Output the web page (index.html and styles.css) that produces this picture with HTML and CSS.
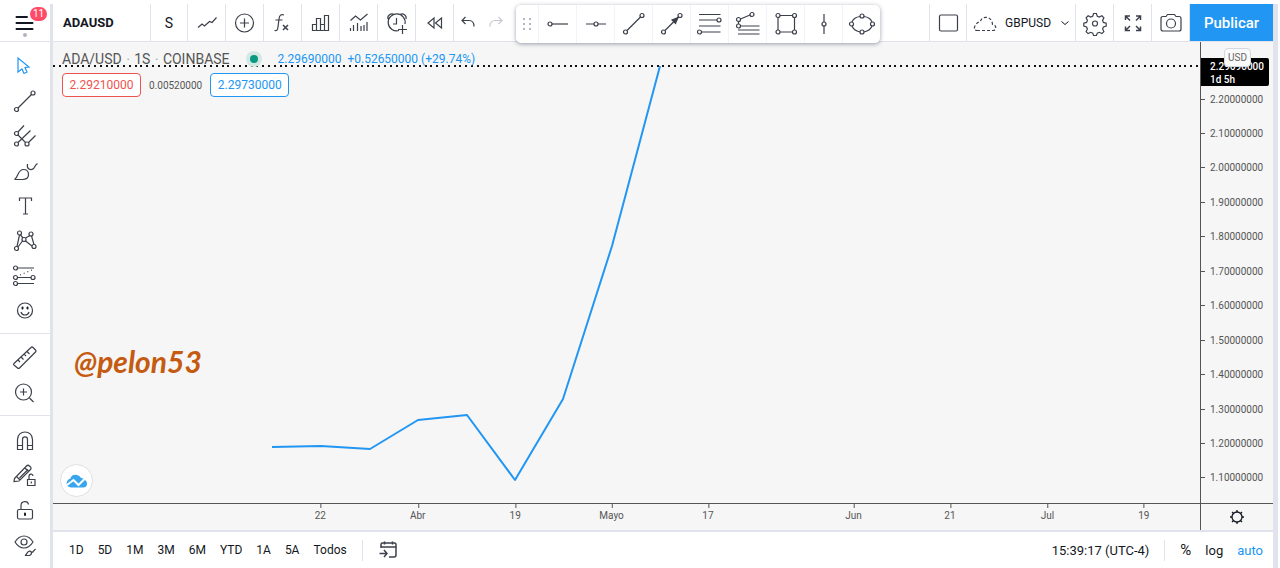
FILE: index.html
```html
<!DOCTYPE html>
<html lang="es">
<head>
<meta charset="utf-8">
<title>ADAUSD</title>
<meta name="viewport" content="width=device-width, initial-scale=1">
<link rel="stylesheet" href="styles.css">
</head>
<body>
<div class="app">
  <nav class="tools" aria-label="Herramientas de dibujo">
    <button class="menu" aria-label="Menú">
      <svg class="icon" viewBox="0 0 28 28"><path class="thick" d="M5.500 8h10.500M5.500 14h16M5.500 20h16"/></svg>
      <span class="count">11</span><span class="dot"></span>
    </button>
    <div class="group">
      <button class="tool active" aria-label="Cursor"><svg class="icon" viewBox="0 0 28 28"><path d="M7 6v14l4-3 2 4.500 3-1.500-2-4.500 4-.5z"/></svg></button>
      <button class="tool" aria-label="Línea"><svg class="icon" viewBox="0 0 28 28"><circle cx="22" cy="6" r="2"/><circle cx="5.500" cy="22.500" r="2"/><path d="M7 21L20.500 7.500"/></svg></button>
      <button class="tool" aria-label="Tridente"><svg class="icon" viewBox="0 0 28 28"><circle cx="5.500" cy="11.500" r="2"/><circle cx="5.500" cy="22" r="2"/><circle cx="16" cy="22" r="2"/><path d="M7 10l6-6.500M7 13l7.500 7.500M7 20.500L19.500 8.500M17.500 20.500L24.500 13.500"/></svg></button>
      <button class="tool" aria-label="Pincel"><svg class="icon" viewBox="0 0 28 28"><path d="M3.500 22.500c4-2 3-10 9-10 3 0 5 2 5 5s-2 5-6 5zM16.500 7c-1 5 3 7 6 4.500 1.500-1 1-3 4-5"/></svg></button>
      <button class="tool" aria-label="Texto"><svg class="icon" viewBox="0 0 28 28"><path d="M8.500 9V6h12v3M14.500 6v16M12 22h5"/></svg></button>
      <button class="tool" aria-label="Patrón"><svg class="icon" viewBox="0 0 28 28"><circle cx="8.500" cy="6" r="2"/><circle cx="20" cy="7" r="2"/><circle cx="13" cy="12.500" r="2"/><circle cx="5.500" cy="21.500" r="2"/><circle cx="23" cy="19.500" r="2"/><path d="M8.500 8L6 19.500M9.500 8l2.500 3M14.500 11L19 8.500M20.500 9l2.500 8.500M14.500 14l6.500 5M11.500 14L7 20"/></svg></button>
      <button class="tool" aria-label="Previsión"><svg class="icon" viewBox="0 0 28 28"><circle cx="4.500" cy="6" r="2"/><circle cx="4.500" cy="15.500" r="2"/><circle cx="22" cy="15.500" r="2"/><circle cx="4.500" cy="21.500" r="2"/><path d="M6.500 6H23M6.500 15.500H20M6.500 21.500H23"/><path stroke-dasharray="1 3" d="M9 13L22 7.500"/></svg></button>
      <button class="tool" aria-label="Iconos"><svg class="icon" viewBox="0 0 28 28"><circle cx="14" cy="13.500" r="7.500"/><path d="M10 15c1 4 7 4 8 0"/><path class="thick" d="M11.500 10.500v1M16.500 10.500v1"/></svg></button>
    </div>
    <div class="group">
      <button class="tool" aria-label="Medir"><svg class="icon" viewBox="0 0 28 28"><path d="M3 19.500L20 3.500q1-1 2 0l2.500 2.500q1 1 0 2L8.500 24q-1 1-2 0L3 21q-.8-.8 0-1.500zM7 16l2 2M10 13l2.500 2.500M13 10l2 2M16 7.500l2.500 2.500"/></svg></button>
      <button class="tool" aria-label="Acercar"><svg class="icon" viewBox="0 0 28 28"><circle cx="12.500" cy="13" r="8"/><path d="M12.500 9.500v7M9 13h7M18.500 19l4 4"/></svg></button>
    </div>
    <div class="group">
      <button class="tool" aria-label="Imán"><svg class="icon" viewBox="0 0 28 28"><path d="M6.500 23.500V13.500c0-10 15-10 15 0v10h-5v-10c0-3.500-5-3.500-5 0v10zM6.500 19.500h5M16.500 19.500h5"/></svg></button>
      <button class="tool" aria-label="Modo dibujo"><svg class="icon" viewBox="0 0 28 28"><path d="M3.500 17.500L15.500 5q1.500-1.500 3 0 2.500 2 1 3.500L8 20l-5 .5zM6 16l3 3M14 7l4 4M8.500 17L17 8.500"/><path d="M16.500 18.500h7.500v6h-7.500zM18 18.500v-3c0-3 4-3 4-.5"/><path d="M20.300 20.500v2"/></svg></button>
      <button class="tool" aria-label="Bloquear"><svg class="icon" viewBox="0 0 28 28"><rect x="6.500" y="13.500" width="15" height="9.500" rx="1.500"/><path d="M10 13.500V9.500c0-5 7-5 7.500-1"/><path class="thick" d="M14 17.500v1.500"/></svg></button>
      <button class="tool" aria-label="Ocultar"><svg class="icon" viewBox="0 0 28 28"><path d="M4 11c5-8 13-8 18 0-5 8-13 8-18 0z"/><circle cx="13" cy="11" r="3"/><path d="M14 24.500c2-1 2-4 4.500-4.500 2.500 0 3 3 0 4.500zM19 19.500c0 2 3 2.500 3.500.500l2-2"/></svg></button>
    </div>
  </nav>

  <div class="main">
    <header class="topbar">
      <button class="symbol">ADAUSD</button>
      <button class="cell text">S</button>
      <button class="cell" aria-label="Tipo de gráfico"><svg class="icon" viewBox="0 0 28 28"><path d="M5 18.500l4-3.500 2.500 2 5-4.500 2.500 1 4.500-5"/></svg></button>
      <button class="cell" aria-label="Comparar"><svg class="icon" viewBox="0 0 28 28"><circle cx="13.500" cy="14" r="9"/><path d="M13.500 9.500v9M9 14h9"/></svg></button>
      <button class="cell" aria-label="Indicadores"><svg class="icon" viewBox="0 0 28 28"><path d="M15 6c-3-1-4.500 0-5 4l-1 8c-.4 3-1 4-3.500 3.500M6.500 11h7"/><path class="medium" d="M14 16l5 5M19 16l-5 5"/></svg></button>
      <button class="cell" aria-label="Finanzas"><svg class="icon" viewBox="0 0 28 28"><path d="M5.500 21.500v-6h4v6zM9.500 21.500V9.500h4v12zM13.500 21.500v-6h4v6zM17.500 21.500V6.500h4v15z"/></svg></button>
      <button class="cell" aria-label="Plantillas"><svg class="icon" viewBox="0 0 28 28"><path d="M5.500 11.500l5-4.500 5 4 7-6M5.500 22v-3M8.500 22v-6M12.500 22v-8M16 22v-5M19 22v-6M22 22v-9"/></svg></button>
      <button class="cell" aria-label="Alerta"><svg class="icon" viewBox="0 0 28 28"><path d="M16 21.500A8.500 8.500 0 1 1 22 15M13.500 9v6h-3.500M5 10c-1-4 3-6 6-4.500M23 10c1-4-3-6-6-4.500M19.500 16v9M15 20.500h9"/></svg></button>
      <button class="cell" aria-label="Reproducir"><svg class="icon" viewBox="0 0 28 28"><path d="M13 9v10l-6-5zM20.500 9v10l-6-5z"/></svg></button>
      <div class="history">
        <button aria-label="Deshacer"><svg class="icon" viewBox="0 0 28 28"><path d="M11.500 8L8 11.500l3.500 3.500M8 11.500h7q5 0 5 6"/></svg></button>
        <button class="faded" aria-label="Rehacer"><svg class="icon" viewBox="0 0 28 28"><path d="M16.500 8l3.500 3.500-3.500 3.500M20 11.500h-7q-5 0-5 6"/></svg></button>
      </div>
      <div class="spacer"></div>
      <button class="cell first" aria-label="Diseño"><svg class="icon" viewBox="0 0 28 28"><rect x="5.500" y="6" width="18" height="16" rx="1.500"/></svg></button>
      <button class="layout"><svg class="icon" viewBox="0 0 28 28"><path stroke-dasharray="3 2" d="M6 21.500h16c4 0 3.500-6-.5-6-.5-9-11-9-12-3-5 .5-9 9-3.500 9z"/></svg><span>GBPUSD</span><svg class="chevron" viewBox="0 0 10 10"><path d="M1.500 3.500L5 6.500l3.500-3"/></svg></button>
      <button class="cell" aria-label="Configuración"><svg class="icon" viewBox="0 0 28 28"><path d="M12.600 4.500h2.800l.9 2.800 2 .8 2.600-1.300 2 2-1.300 2.600.8 2 2.800.9v2.800l-2.800.9-.8 2 1.300 2.600-2 2-2.600-1.300-2 .8-.9 2.400h-2.800l-.9-2.400-2-.8-2.600 1.300-2-2L6.400 20l-.8-2-2.800-.9v-2.800l2.800-.9.8-2L5.100 8.800l2-2 2.600 1.300 2-.8z"/><circle cx="14" cy="14.500" r="2.500"/></svg></button>
      <button class="cell" aria-label="Pantalla completa"><svg class="icon" viewBox="0 0 28 28"><path class="medium" d="M6.500 11V7H11M7 7.500l4 4M17 7h4.500v4M21 7.500l-4 4M6.500 17.500v4H11M7 21l4-4M17 21.500h4.500v-4M21 21l-4-4"/></svg></button>
      <button class="cell" aria-label="Captura"><svg class="icon" viewBox="0 0 28 28"><path d="M6 7.500h3l1.500-2h7l1.500 2h3q2 0 2 2V20q0 2-2 2H6q-2 0-2-2V9.500q0-2 2-2z"/><circle cx="14" cy="14.500" r="4.500"/></svg></button>
      <button class="publish">Publicar</button>
      <div class="favorites">
        <span class="grip"><svg viewBox="0 0 10 14"><path stroke-dasharray="2 3" d="M2 1v12M8 1v12"/></svg></span>
        <button aria-label="Rayo"><svg class="icon" viewBox="0 0 28 28"><circle cx="6" cy="14" r="2"/><path d="M8 14h16"/></svg></button>
        <button aria-label="Horizontal"><svg class="icon" viewBox="0 0 28 28"><circle cx="14" cy="14" r="2"/><path d="M4 14h8M16 14h8"/></svg></button>
        <button aria-label="Tendencia"><svg class="icon" viewBox="0 0 28 28"><circle cx="22" cy="5.500" r="2"/><circle cx="5.500" cy="22" r="2"/><path d="M7 20.500L20.500 7"/></svg></button>
        <button aria-label="Flecha"><svg class="icon" viewBox="0 0 28 28"><circle cx="22" cy="5.500" r="2"/><circle cx="5.500" cy="22" r="2"/><path d="M7 20.500L20.500 7"/><path class="solid" d="M20 7.500l-2.500 6-3.500-3.500z"/></svg></button>
        <button aria-label="Fibonacci"><svg class="icon" viewBox="0 0 28 28"><path d="M3 4.500h21.500M3 10h18M3 16h21.500M5 22h19.500"/><circle cx="23" cy="10" r="2"/><circle cx="3.500" cy="22" r="2"/></svg></button>
        <button aria-label="Extensión"><svg class="icon" viewBox="0 0 28 28"><circle cx="18" cy="4.500" r="2"/><circle cx="4.500" cy="9.500" r="2"/><circle cx="4.500" cy="16" r="2"/><path d="M6.500 9L16 5M4.500 11.500V14M6.500 16h19M4 20h21.500M4 24h21.500"/></svg></button>
        <button aria-label="Rectángulo"><svg class="icon" viewBox="0 0 28 28"><circle cx="6" cy="5.500" r="2"/><circle cx="22.500" cy="5.500" r="2"/><circle cx="6" cy="22" r="2"/><circle cx="22.500" cy="22" r="2"/><path d="M8 5.500h12.500M8 22h12.500M6 7.500V20M22.500 7.500V20"/></svg></button>
        <button aria-label="Vertical"><svg class="icon" viewBox="0 0 28 28"><circle cx="14" cy="14" r="2"/><path d="M14 4v8M14 16v8"/></svg></button>
        <button aria-label="Elipse"><svg class="icon" viewBox="0 0 28 28"><circle cx="14" cy="6" r="2"/><circle cx="14" cy="22" r="2"/><circle cx="3.500" cy="14" r="2"/><circle cx="24.500" cy="14" r="2"/><path d="M12 6.500C8 7 5 9.500 4 12M16 6.500c4 .5 7 3 8 5.500M4 16c1 3 4 5 8 6M24 16c-1 3-4 5-8 6"/></svg></button>
      </div>
    </header>

    <main class="chart">
      <section class="plot">
        <svg class="series" viewBox="0 0 1147 461" preserveAspectRatio="none">
          <path class="last" d="M0 24H1147"/>
          <polyline class="price" points="219,405 268,404 317,407 365,378 414,373 462,438 510,357 559,204 607,24"/>
        </svg>
        <div class="legend">
          <div class="legend-row"><span class="title">ADA/USD <i>·</i> 1S <i>·</i> COINBASE</span><span class="status"></span><span class="change"><span>2.29690000</span><span>+0.52650000 (+29.74%)</span></span></div>
          <div class="quotes"><button class="quote sell">2.29210000</button><span class="spread">0.00520000</span><button class="quote buy">2.29730000</button></div>
        </div>
        <div class="signature">@pelon53</div>
        <button class="logo" aria-label="Logo"><svg viewBox="0 0 22 14"><path class="cloud" d="M5 13.500h12c5 0 5-6 2-7.500-1-1.500-3-2-4-2C12-1 5 0 4.500 4.500-1 6-.5 13.500 5 13.500z"/><path class="wave" d="M1 11l6.500-5 5 5 6-6"/></svg></button>
      </section>
      <aside class="price-axis">
        <span>2.20000000</span><span>2.10000000</span><span>2.00000000</span><span>1.90000000</span><span>1.80000000</span><span>1.70000000</span><span>1.60000000</span><span>1.50000000</span><span>1.40000000</span><span>1.30000000</span><span>1.20000000</span><span>1.10000000</span>
        <div class="last-tag"><b>2.29690000</b><b>1d 5h</b></div>
        <button class="currency">USD</button>
      </aside>
      <div class="time-axis">
        <span style="left:23.300%">22</span><span style="left:31.800%">Abr</span><span style="left:40.300%">19</span><span style="left:48.700%">Mayo</span><span style="left:57.100%">17</span><span style="left:69.800%">Jun</span><span style="left:78.200%">21</span><span style="left:86.700%">Jul</span><span style="left:95.100%">19</span>
      </div>
      <button class="corner" aria-label="Ajustes de escala"><svg viewBox="0 0 16 16"><circle cx="8" cy="8" r="5"/><path d="M8 1v2M8 13v2M1 8h2M13 8h2M3 3l1.500 1.500M11.500 11.500L13 13M3 13l1.500-1.500M11.500 4.500L13 3"/></svg></button>
    </main>

    <footer class="bottombar">
      <div class="ranges"><button>1D</button><button>5D</button><button>1M</button><button>3M</button><button>6M</button><button>YTD</button><button>1A</button><button>5A</button><button>Todos</button></div>
      <span class="divider"></span>
      <button aria-label="Ir a fecha"><svg class="icon" viewBox="0 0 28 28"><path class="medium" d="M7 12V8.500q0-1.500 1.500-1.500h12q1.500 0 1.500 1.500V19q0 2-2 2h-5M7 11h15M10.500 5.500v3M18.500 5.500v3M5.500 17.500h7M10 14l3 3.500-3 3.500"/></svg></button>
      <div class="spacer"></div>
      <button class="clock">15:39:17 (UTC-4)</button>
      <span class="divider right"></span>
      <div class="scale"><button class="percent">%</button><button>log</button><button class="on">auto</button></div>
    </footer>
  </div>
</div>
</body>
</html>
```
FILE: styles.css
```css
* { box-sizing: border-box; }
body { margin: 0; background: #fff; color: #131722; font-family: Roboto, "Liberation Sans", sans-serif; font-size: 13px; }
button { margin: 0; padding: 0; border: 0; background: none; color: inherit; font: inherit; cursor: pointer; }
svg { display: block; fill: none; stroke: currentColor; }
.icon { width: 28px; height: 28px; flex: none; stroke-width: 1.2; color: #3c404b; }
.thick { stroke-width: 2; stroke: #131722; stroke-linecap: round; }
.medium { stroke-width: 1.5; }
.solid { fill: currentColor; }
.spacer { flex: 1; }

.app { display: flex; min-height: 100vh; padding: 4px 2px 0 0; }
.tools { flex: none; width: 50px; }
.menu { position: relative; display: flex; align-items: center; justify-content: center; width: 50px; height: 38px; border-bottom: 1px solid #e0e3eb; }
.count { position: absolute; top: 3px; left: 30px; width: 17px; height: 14px; border-radius: 7px; background: #ff4a68; color: #fff; font-size: 10px; line-height: 14px; }
.dot { position: absolute; top: 29px; left: 23px; width: 4px; height: 4px; border-radius: 2px; background: #b2b5be; }
.group { display: flex; flex-direction: column; padding: 6px 0 5px; border-bottom: 1px solid #e0e3eb; }
.group:last-child { border: 0; }
.tool { display: flex; align-items: center; justify-content: center; height: 35px; }
.active .icon { color: #2196f3; }

.main { flex: 1; min-width: 0; display: flex; flex-direction: column; border: solid #e0e3eb; border-width: 0 5px 0 3px; }
.topbar { position: relative; display: flex; height: 38px; border-bottom: 1px solid #e0e3eb; }
.topbar > button { display: flex; align-items: center; justify-content: center; border-right: 1px solid #e0e3eb; }
.topbar > .symbol { width: 98px; padding-left: 10px; justify-content: flex-start; font-weight: 700; }
.cell { width: 38px; }
.topbar > .text { width: 37px; font-size: 14px; }
.topbar > .first { border-left: 1px solid #e0e3eb; }
.history { display: flex; align-items: center; }
.faded .icon { color: #c8cad0; }
.topbar > .layout { width: 109px; justify-content: flex-start; gap: 6px; padding-left: 4px; font-size: 12px; }
.chevron { width: 10px; height: 10px; margin-left: 3px; }
.topbar > .publish { width: 83px; border: 0; background: #2196f3; color: #fff; font-size: 15px; font-weight: 500; }
.favorites { position: absolute; z-index: 2; top: 1px; left: 463px; display: flex; height: 38px; border-radius: 5px; background: #fff; box-shadow: 0 1px 4px rgba(60, 64, 90, .5); }
.favorites > * { display: flex; align-items: center; justify-content: center; width: 38px; }
.favorites button { border-left: 1px solid #f0f3fa; }
.favorites .grip { width: 22px; color: #b2b5be; }
.grip svg { width: 10px; height: 14px; stroke-width: 2; }

.chart { flex: 1; display: grid; grid-template: 1fr 27px / 1fr 73px; background: #f6f6f6; border-bottom: 2px solid #e0e3eb; color: #555; font-size: 10px; }
.plot { position: relative; min-width: 0; }
.series { position: absolute; inset: 0; width: 100%; height: 100%; }
.series * { vector-effect: non-scaling-stroke; stroke-width: 2; }
.last { stroke: #111; stroke-dasharray: 2 4 2 4 2 4 2 4 2 3; }
.price { stroke: #2196f3; stroke-linejoin: round; }
.legend { position: relative; padding: 8px 9px; }
.legend-row { display: flex; align-items: center; height: 17px; }
.title { font-size: 14px; }
.title i { color: #a0a3ac; margin: 0 1px; }
.status { width: 8px; height: 8px; margin: 0 20px; border-radius: 50%; background: #089981; box-shadow: 0 0 0 4px #d3e8e4; }
.change { display: flex; gap: 6px; color: #2196f3; font-size: 12px; }
.quotes { display: flex; align-items: center; gap: 8px; margin-top: 6px; }
.quote { width: 79px; height: 24px; border: 1px solid; border-radius: 4px; background: #fff; font-size: 12px; }
.sell { color: #ef5350; }
.buy { color: #2196f3; }
.signature { position: absolute; left: 21px; bottom: 124px; color: #c55a11; font: italic 700 30px/36px Lato, sans-serif; }
.logo { position: absolute; left: 7px; bottom: 6px; display: flex; align-items: center; justify-content: center; width: 33px; height: 33px; border: 1px solid #e0e0e0; border-radius: 50%; background: #fff; }
.logo svg { width: 22px; height: 14px; }
.cloud { fill: #37a6ef; stroke: none; }
.wave { stroke: #fff; stroke-width: 2; }
.price-axis { position: relative; display: flex; flex-direction: column; justify-content: space-between; padding: 49px 0 17px; border-left: 1px solid #555; }
.price-axis > span { display: flex; align-items: center; gap: 5px; height: 16px; }
.price-axis > span::before { content: ""; width: 4px; height: 1px; background: #555; }
.last-tag { position: absolute; top: 16px; left: 0; display: flex; flex-direction: column; width: 68px; height: 28px; padding: 2px 0 0 9px; border-radius: 0 2px 2px 0; background: #000; color: #fff; line-height: 13px; }
.last-tag b { font-weight: 500; }
.currency { position: absolute; top: 6px; left: 23px; width: 27px; height: 19px; border: 1px solid #d5d7df; border-radius: 4px; background: #fafafa; color: #666; }
.time-axis { position: relative; border-top: 1px solid #555; }
.time-axis span { position: absolute; top: 0; padding-top: 6px; transform: translateX(-50%); line-height: 12px; }
.time-axis span::before { content: ""; position: absolute; top: 0; left: 50%; width: 1px; height: 4px; background: #555; }
.corner { display: flex; align-items: center; justify-content: center; border: solid #555; border-width: 1px 0 0 1px; color: #131722; }
.corner svg { width: 16px; height: 16px; stroke-width: 1.3; }

.bottombar { display: flex; align-items: center; height: 36px; padding: 0 10px 0 16px; }
.ranges, .scale { display: flex; align-items: center; gap: 14px; }
.ranges { font-size: 12px; }
.divider { width: 1px; height: 21px; margin: 0 11px 0 15px; background: #e0e3eb; }
.divider.right { margin-right: 15px; }
.percent { font-size: 15px; }
.on { color: #2196f3; }
```
